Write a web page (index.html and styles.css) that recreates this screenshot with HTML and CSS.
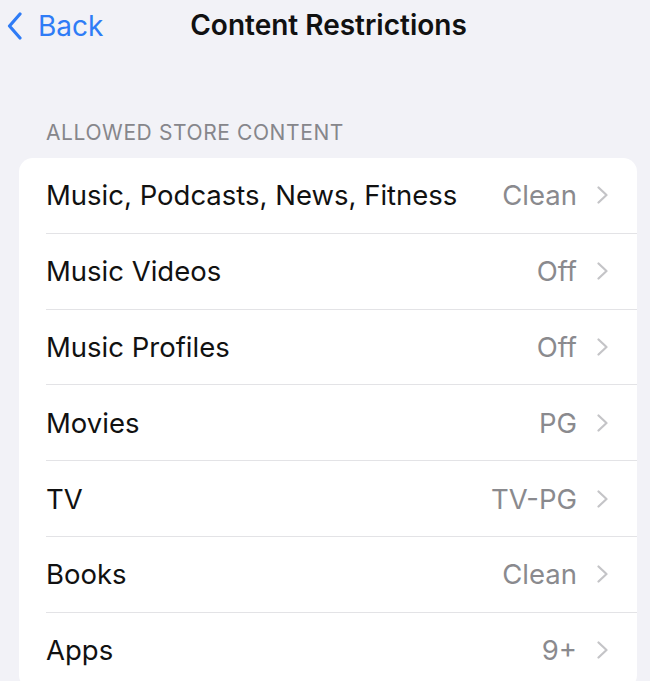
FILE: index.html
```html
<!DOCTYPE html>
<html>
    <head>
        <link rel="stylesheet" href="styles.css">
    </head>
    <body>
        <header class="nav-bar">
            <a class="back" href="#">
                <svg class="back-chevron" viewBox="0 0 16 28" width="16" height="28">
                    <path d="M13 2 L2.5 14 L13 26" fill="none" stroke="currentColor" stroke-width="3.2" stroke-linecap="round" stroke-linejoin="round"/>
                </svg>
                <span>Back</span>
            </a>
            <h1 class="title">Content Restrictions</h1>
        </header>

        <section class="group">
            <h2 class="group-label">ALLOWED STORE CONTENT</h2>
            <ul class="card">
                <li class="row"><span class="row-label">Music, Podcasts, News, Fitness</span><span class="row-value">Clean</span><svg class="chevron" viewBox="0 0 13 18" width="13" height="18"><path d="M2.5 1.5 L10.5 9 L2.5 16.5" /></svg></li>
                <li class="row"><span class="row-label">Music Videos</span><span class="row-value">Off</span><svg class="chevron" viewBox="0 0 13 18" width="13" height="18"><path d="M2.5 1.5 L10.5 9 L2.5 16.5" /></svg></li>
                <li class="row"><span class="row-label">Music Profiles</span><span class="row-value">Off</span><svg class="chevron" viewBox="0 0 13 18" width="13" height="18"><path d="M2.5 1.5 L10.5 9 L2.5 16.5" /></svg></li>
                <li class="row"><span class="row-label">Movies</span><span class="row-value">PG</span><svg class="chevron" viewBox="0 0 13 18" width="13" height="18"><path d="M2.5 1.5 L10.5 9 L2.5 16.5" /></svg></li>
                <li class="row"><span class="row-label">TV</span><span class="row-value">TV-PG</span><svg class="chevron" viewBox="0 0 13 18" width="13" height="18"><path d="M2.5 1.5 L10.5 9 L2.5 16.5" /></svg></li>
                <li class="row"><span class="row-label">Books</span><span class="row-value">Clean</span><svg class="chevron" viewBox="0 0 13 18" width="13" height="18"><path d="M2.5 1.5 L10.5 9 L2.5 16.5" /></svg></li>
                <li class="row"><span class="row-label">Apps</span><span class="row-value">9+</span><svg class="chevron" viewBox="0 0 13 18" width="13" height="18"><path d="M2.5 1.5 L10.5 9 L2.5 16.5" /></svg></li>
            </ul>
        </section>
    </body>
</html>
```

FILE: styles.css
```css
body{
    margin: 0;
    background-color: #f2f2f7;
    font-family: Inter, "Noto Sans", sans-serif;
    color: #111;
    overflow: hidden;
}

.nav-bar{
    position: relative;
    height: 52px;
    display: flex;
    align-items: center;
}

.back{
    display: flex;
    align-items: center;
    gap: 15px;
    padding-left: 7px;
    color: #2f7cf6;
    text-decoration: none;
    font-size: 28px;
}

.back-chevron{
    display: block;
}

.title{
    position: absolute;
    left: 0;
    right: 0;
    top: 0;
    margin: 0;
    padding-left: 7px;
    line-height: 50px;
    text-align: center;
    font-size: 28px;
    font-weight: 600;
    pointer-events: none;
}

.group{
    padding: 68px 13px 0 19px;
}

.group-label{
    margin: 0 0 13px 27px;
    font-size: 21px;
    font-weight: 400;
    color: #86868b;
    letter-spacing: 0.6px;
}

.card{
    list-style: none;
    margin: 0;
    padding: 0 0 0 27px;
    background-color: #fff;
    border-radius: 14px;
}

.row{
    display: flex;
    align-items: center;
    height: 74.8px;
    border-bottom: 1px solid #e3e3e6;
    padding-right: 28px;
    font-size: 27.5px;
}

.row-label{
    flex: 1;
}

.row-value{
    color: #8a8a8e;
    margin-right: 19px;
}

.chevron{
    display: block;
    fill: none;
    stroke: #c4c4c7;
    stroke-width: 2.2;
    stroke-linecap: round;
    stroke-linejoin: round;
}
```
